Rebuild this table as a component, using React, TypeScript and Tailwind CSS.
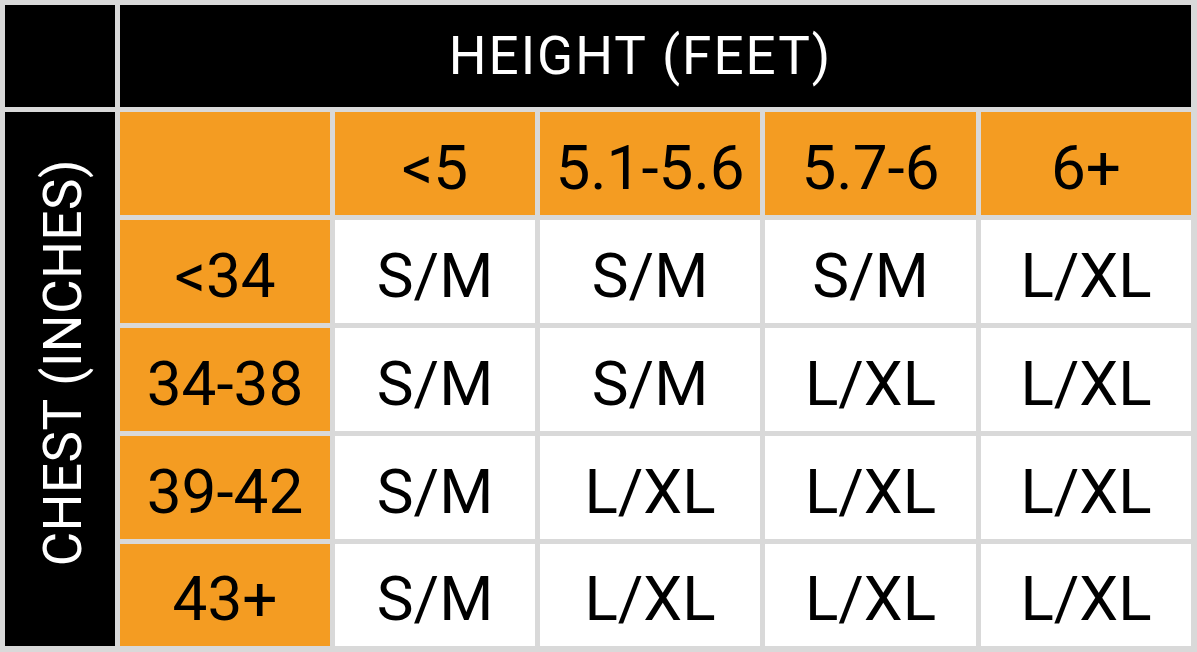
import React from 'react';

// size chart data: rows are chest ranges, columns are height ranges
const heights = ['<5', '5.1-5.6', '5.7-6', '6+'];
const rows: { chest: string; sizes: string[] }[] = [
  { chest: '<34', sizes: ['S/M', 'S/M', 'S/M', 'L/XL'] },
  { chest: '34-38', sizes: ['S/M', 'S/M', 'L/XL', 'L/XL'] },
  { chest: '39-42', sizes: ['S/M', 'L/XL', 'L/XL', 'L/XL'] },
  { chest: '43+', sizes: ['S/M', 'L/XL', 'L/XL', 'L/XL'] },
];

const cell = 'flex items-center justify-center pt-[8px] text-[62px] leading-none tracking-[0px] text-black';

export default function App() {
  return (
    <div className="w-[1197px] h-[652px] bg-[#d9d9d9] pt-[5px] pl-[5px] pr-[6px] pb-[6px] font-['Roboto',sans-serif]">
      <div className="grid h-full grid-cols-[110px_210px_200px_220px_211px_210px] grid-rows-[102px_103px_103px_103px_103px_102px] gap-[5px]">
        {/* 左上角空块 */}
        <div className="bg-black" />
        <div className="col-span-5 bg-black flex items-center justify-center pr-[30px] text-white text-[53px] leading-none tracking-[2px]">
          HEIGHT (FEET)
        </div>

        {/* 竖排标题 */}
        <div className="row-span-5 bg-black flex items-center justify-center pb-[32px] pl-[6px]">
          <span className="[writing-mode:vertical-rl] rotate-180 text-white text-[53px] leading-none tracking-[0.5px]">
            CHEST (INCHES)
          </span>
        </div>

        <div className="bg-[#f49c22]" />
        {heights.map((h) => (
          <div key={h} className={`${cell} bg-[#f49c22]`}>{h}</div>
        ))}

        {rows.map((r) => (
          <React.Fragment key={r.chest}>
            <div className={`${cell} bg-[#f49c22]`}>{r.chest}</div>
            {r.sizes.map((s, i) => (
              <div key={i} className={`${cell} bg-white`}>{s}</div>
            ))}
          </React.Fragment>
        ))}
      </div>
    </div>
  );
}
